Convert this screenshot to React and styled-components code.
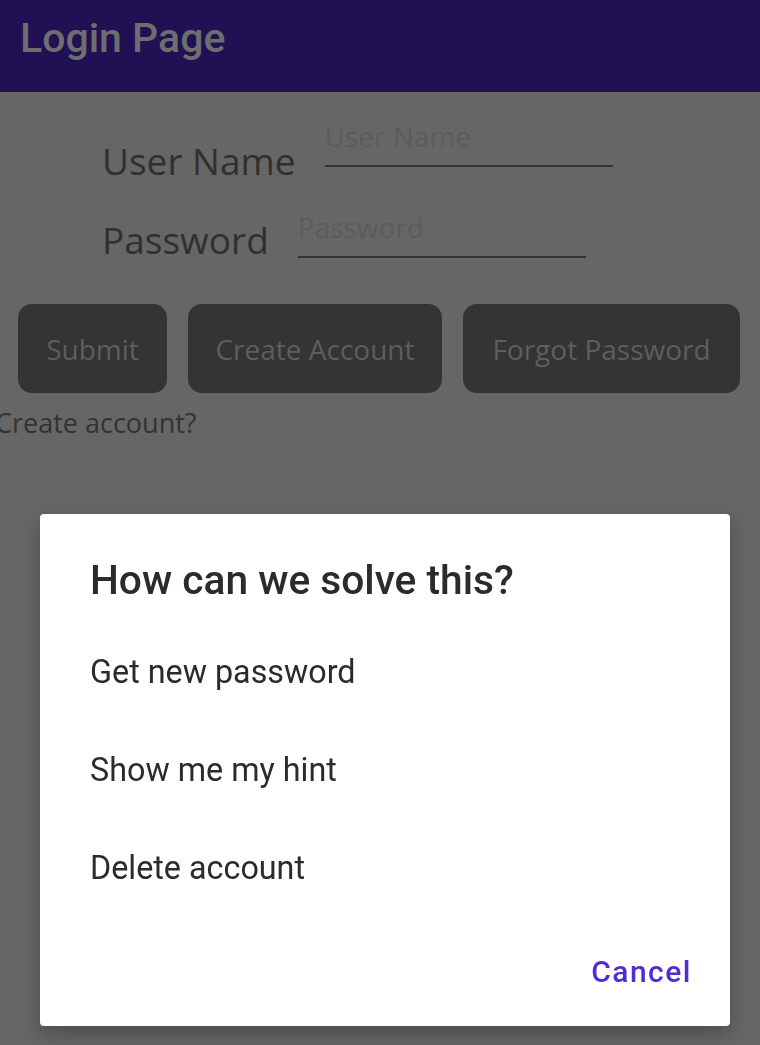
import React from "react";
import styled, { createGlobalStyle } from "styled-components";

const GlobalStyle = createGlobalStyle`
  html, body {
    margin: 0;
    padding: 0;
    background: #666666;
    overflow: hidden;
  }
  * {
    box-sizing: border-box;
  }
`;

const Page = styled.div`
  width: 760px;
  height: 1045px;
  background: #666666;
  font-family: "Open Sans", "Liberation Sans", sans-serif;
`;

const Toolbar = styled.header`
  height: 92px;
  background: #201155;
  display: flex;
  align-items: center;
  padding: 0 0 17px 20px;
`;

const Title = styled.h1`
  margin: 0;
  font-family: Roboto, "Liberation Sans", sans-serif;
  font-weight: 500;
  font-size: 41px;
  line-height: 48px;
  color: #6e6e6e;
`;

const Form = styled.div`
  display: flex;
  flex-direction: column;
  gap: 27px;
  padding: 25px 0 0 102px;
`;

const Field = styled.div`
  display: flex;
  align-items: flex-end;
  gap: 29px;
`;

const Label = styled.span`
  font-size: 37px;
  line-height: 40px;
  color: #303030;
`;

const Entry = styled.div`
  width: 288px;
  height: 50px;
  padding-top: 4px;
  border-bottom: 2px solid #333333;
  font-size: 28px;
  color: #5c5c5c;
  line-height: 30px;
  margin-bottom: ${({ $drop }) => $drop}px;
`;

const ButtonRow = styled.div`
  display: flex;
  gap: 21px;
  padding: 44px 0 0 18px;
`;

const Button = styled.button`
  height: 89px;
  width: ${({ $w }) => $w}px;
  border: none;
  border-radius: 14px;
  background: #343434;
  color: #5e5e5e;
  font-family: "Open Sans", "Liberation Sans", sans-serif;
  font-size: 28px;
  padding: 0;
`;

const Link = styled.div`
  margin: 11px 0 0 -5px;
  font-size: 27px;
  color: #333333;
`;

const Dialog = styled.div`
  position: fixed;
  left: 40px;
  top: 514px;
  width: 690px;
  height: 512px;
  background: #ffffff;
  border-radius: 4px;
  box-shadow: 0 8px 20px rgba(0, 0, 0, 0.25);
  font-family: Roboto, "Liberation Sans", sans-serif;
  display: flex;
  flex-direction: column;
  padding: 42px 38px 0 50px;
`;

const DialogTitle = styled.h2`
  margin: 0 0 48px;
  font-weight: 500;
  font-size: 40.7px;
  line-height: 48px;
  color: #2b2b2b;
`;

const Option = styled.div`
  font-size: 32.3px;
  line-height: 40px;
  color: #2b2b2b;
  padding: 0 0 58px;
`;

const Actions = styled.div`
  display: flex;
  justify-content: flex-end;
  margin-top: auto;
  padding-bottom: 37px;
`;

const TextButton = styled.button`
  border: none;
  background: none;
  padding: 0;
  font-family: Roboto, "Liberation Sans", sans-serif;
  font-weight: 500;
  font-size: 30px;
  letter-spacing: 1.5px;
  color: #512bd4;
`;

export default function App() {
  return (
    <>
      <GlobalStyle />
      <Page>
        <Toolbar>
          <Title>Login Page</Title>
        </Toolbar>
        <Form>
          <Field>
            <Label>User Name</Label>
            <Entry $drop={14}>User Name</Entry>
          </Field>
          <Field>
            <Label>Password</Label>
            <Entry $drop={2}>Password</Entry>
          </Field>
        </Form>
        <ButtonRow>
          <Button $w={149}>Submit</Button>
          <Button $w={254}>Create Account</Button>
          <Button $w={277}>Forgot Password</Button>
        </ButtonRow>
        <Link>Create account?</Link>
      </Page>
      <Dialog>
        <DialogTitle>How can we solve this?</DialogTitle>
        <Option>Get new password</Option>
        <Option>Show me my hint</Option>
        <Option>Delete account</Option>
        <Actions>
          <TextButton>Cancel</TextButton>
        </Actions>
      </Dialog>
    </>
  );
}
